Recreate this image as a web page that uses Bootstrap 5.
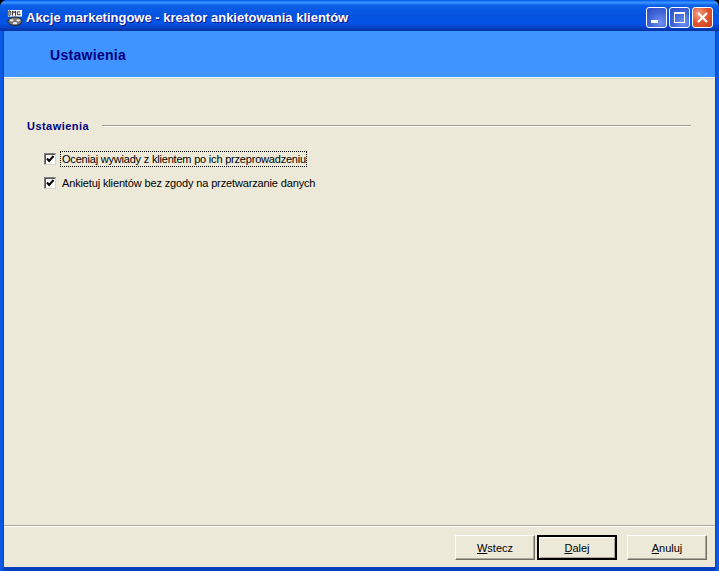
<!DOCTYPE html>
<html lang="pl">
<head>
<meta charset="utf-8">
<title>Akcje marketingowe</title>
<link href="https://cdn.jsdelivr.net/npm/bootstrap@5.3.0/dist/css/bootstrap.min.css" rel="stylesheet">
<style>
html,body{margin:0;height:571px;overflow:hidden;background:#000;}
body{font-family:"Liberation Sans",Arial,sans-serif;font-size:11px;color:#000;}
.xp-window{width:719px;height:571px;background:#0831d9;border-radius:7px 7px 0 0;overflow:hidden;}
.xp-title{height:31px;padding:4px 6px 0 7px;background:linear-gradient(180deg,#0058ee 0%,#3a93ff 8%,#0a5fe8 18%,#0453e0 50%,#0554e6 75%,#0440c4 90%,#02309f 100%);}
.xp-title-text{color:#fff;font-size:13px;font-weight:700;text-shadow:1px 1px 0 #0f1089;margin-left:3px;letter-spacing:0;white-space:nowrap;}
.xp-logo{width:16px;height:16px;flex:none;}
.xp-ctl{width:21px;height:21px;border:1px solid #fff;border-radius:3px;flex:none;margin-left:2px;background:radial-gradient(circle at 70% 75%,#6f92ee 0%,#3f63d8 55%,#2b49c4 100%);}
.xp-ctl-close{background:radial-gradient(circle at 30% 30%,#f0a08a 0%,#e0542f 50%,#c83c1c 100%);}
.xp-ctl svg{display:block;}
.xp-frame{height:540px;padding:0 4px 4px 4px;background:linear-gradient(90deg,#0a5ae6 0,#0a5ae6 2px,#0340c0 4px,#0340c0 715px,#0a5ae6 717px);}
.xp-inner{height:536px;background:#ece9d8;}
.xp-head{height:47px;flex:none;background:#3f94ff;border-bottom:1px solid #fff;box-shadow:0 1px 0 #d6d3c5;padding-left:46px;padding-top:2px;}
.xp-head-text{color:#000080;font-weight:700;font-size:14px;letter-spacing:.3px;}
.xp-body{padding:40px 24px 0 23px;}
.xp-sect{color:#000080;font-weight:700;font-size:11px;white-space:nowrap;letter-spacing:.45px;}
.xp-rule{height:2px;margin-left:13px;background:#9d9a8c;border-bottom:1px solid #fff;}
.xp-opts{padding:16px 0 0 17px;gap:8px;}
.xp-opt{height:16px;line-height:14px;white-space:nowrap;}
.xp-box{width:12px;height:12px;flex:none;border:1px solid #808080;border-right-color:#d4d0c8;border-bottom-color:#d4d0c8;background:#fff;box-shadow:inset 1px 1px 0 #555;margin-right:6px;margin-left:0;}
.xp-box svg{display:block;margin:1px 0 0 1px;}
.xp-lbl{letter-spacing:-.14px;}
.xp-focus{outline:1px dotted #000;outline-offset:0;margin-left:-1px;padding:0 0 0 1px;letter-spacing:-.2px;}
.xp-foot{height:42px;flex:none;border-top:1px solid #aca899;box-shadow:inset 0 1px 0 #fff;padding:9px 8px 0 0;}
.xp-btn{width:80px;height:25px;padding:1px 0 0;font-size:11px;font-family:inherit;color:#000;background:#ece9d8;border:1px solid;border-color:#fff #716f64 #716f64 #fff;border-radius:0;box-shadow:inset -1px -1px 0 #aca899;line-height:21px;}
.xp-btn:hover{background:#ece9d8;color:#000;border-color:#fff #716f64 #716f64 #fff;}
.xp-btn-def{border:2px solid #000;box-shadow:inset 1px 1px 0 #fff,inset -1px -1px 0 #aca899;margin:0 10px 0 2px;line-height:20px;}
.xp-btn-def:hover{border-color:#000;}
</style>
</head>
<body>
<div class="xp-window d-flex flex-column">
  <div class="xp-title d-flex align-items-center">
    <svg class="xp-logo" viewBox="0 0 17 17" aria-hidden="true">
      <rect x="1" y="0" width="15" height="7" fill="#fff"/>
      <path d="M2 1v5h1l1-1V2L3 1zM6 6V1l1.500 2L9 1v5M11 2h3M11 2v3h3V4" fill="none" stroke="#222" stroke-width="1"/>
      <ellipse cx="8.500" cy="12" rx="7.500" ry="4.500" fill="#777" stroke="#222"/>
      <ellipse cx="5" cy="11" rx="2" ry="1.200" fill="#eee"/>
      <ellipse cx="12" cy="11" rx="2" ry="1.200" fill="#eee"/>
      <ellipse cx="8.500" cy="14" rx="2.500" ry="1.200" fill="#eee"/>
    </svg>
    <div class="xp-title-text flex-grow-1">Akcje marketingowe - kreator ankietowania klientów</div>
    <div class="xp-ctl" aria-label="min"><svg width="19" height="19" viewBox="0 0 19 19"><rect x="4" y="12" width="7" height="3" fill="#fff"/></svg></div>
    <div class="xp-ctl" aria-label="max"><svg width="19" height="19" viewBox="0 0 19 19"><rect x="4.500" y="4.500" width="10" height="10" fill="none" stroke="#fff"/><rect x="4" y="4" width="11" height="2" fill="#fff"/></svg></div>
    <div class="xp-ctl xp-ctl-close" aria-label="close"><svg width="19" height="19" viewBox="0 0 19 19"><path d="M5 5l9 9M14 5l-9 9" stroke="#fff" stroke-width="2.200"/></svg></div>
  </div>
  <div class="xp-frame">
    <div class="xp-inner d-flex flex-column">
      <div class="xp-head d-flex align-items-center"><span class="xp-head-text">Ustawienia</span></div>
      <div class="xp-body flex-grow-1">
        <div class="d-flex align-items-center">
          <span class="xp-sect">Ustawienia</span>
          <div class="xp-rule flex-grow-1"></div>
        </div>
        <div class="xp-opts d-flex flex-column">
          <div class="xp-opt d-flex align-items-center">
            <span class="xp-box"><svg width="9" height="9" viewBox="0 0 9 9"><path d="M1 3.500l2.200 2.500 4.300-5" fill="none" stroke="#000" stroke-width="2"/></svg></span>
            <span class="xp-focus">Oceniaj wywiady z klientem po ich przeprowadzeniu</span>
          </div>
          <div class="xp-opt d-flex align-items-center">
            <span class="xp-box"><svg width="9" height="9" viewBox="0 0 9 9"><path d="M1 3.500l2.200 2.500 4.300-5" fill="none" stroke="#000" stroke-width="2"/></svg></span>
            <span class="xp-lbl">Ankietuj klientów bez zgody na przetwarzanie danych</span>
          </div>
        </div>
      </div>
      <div class="xp-foot d-flex justify-content-end align-items-start">
        <button type="button" class="btn xp-btn"><u>W</u>stecz</button>
        <button type="button" class="btn xp-btn xp-btn-def"><u>D</u>alej</button>
        <button type="button" class="btn xp-btn"><u>A</u>nuluj</button>
      </div>
    </div>
  </div>
</div>
<script src="https://cdn.jsdelivr.net/npm/bootstrap@5.3.0/dist/js/bootstrap.bundle.min.js"></script>
</body>
</html>
